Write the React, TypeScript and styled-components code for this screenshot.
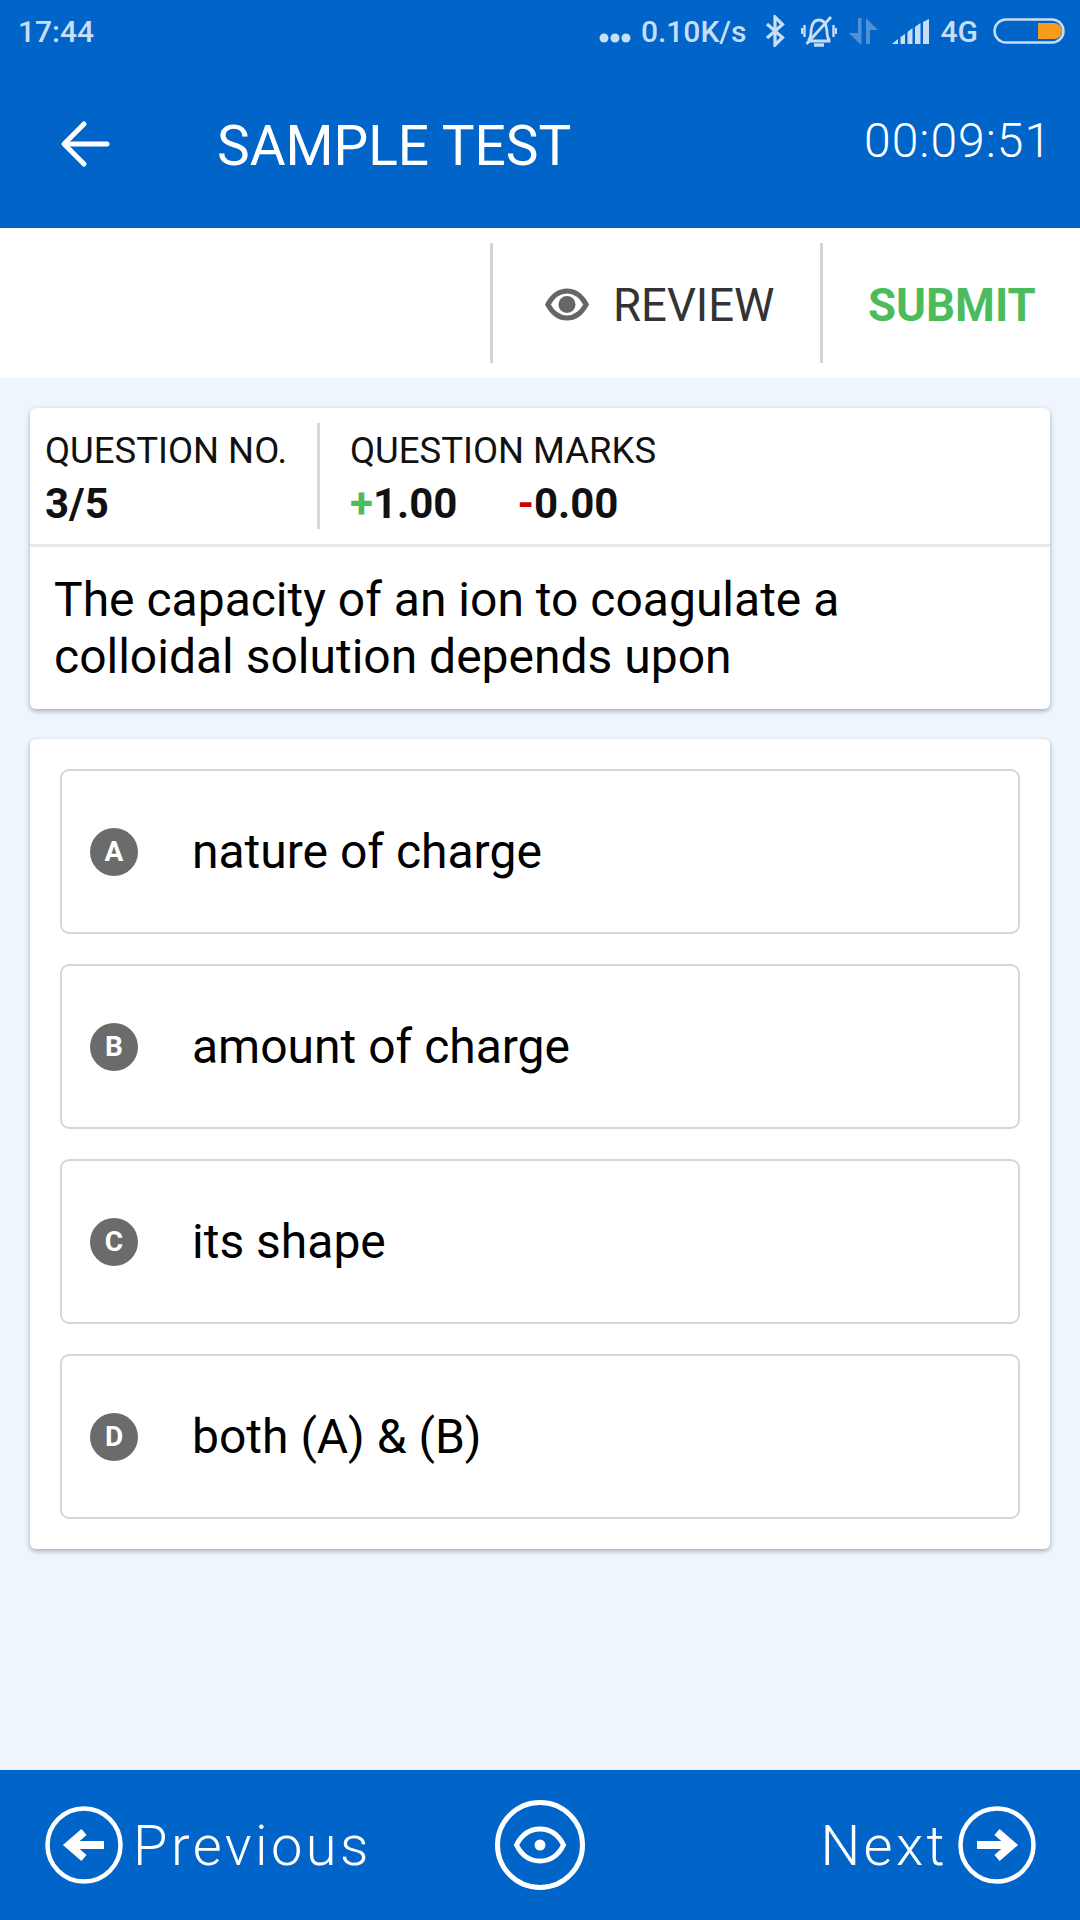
import React from "react";
import styled, { createGlobalStyle } from "styled-components";

const Global = createGlobalStyle`
  html, body { margin: 0; padding: 0; background: #eef5fd; }
  * { box-sizing: border-box; }
  body { font-family: Roboto, "Liberation Sans", sans-serif; }
`;

const Page = styled.div`
  width: 1080px;
  height: 1920px;
  display: flex;
  flex-direction: column;
  background: #eef5fd;
  overflow: hidden;
`;

const Header = styled.header`
  height: 228px;
  background: #0064c8;
  display: flex;
  flex-direction: column;
`;

const StatusBar = styled.div`
  height: 62px;
  padding: 0 15px 0 18px;
  display: flex;
  align-items: center;
  justify-content: space-between;
  color: #c8def5;
  font-size: 30px;
  font-weight: 500;
`;

const StatusRight = styled.div`
  display: flex;
  align-items: center;
`;

const Speed = styled.span`
  margin-left: 10px;
`;

const FourG = styled.span`
  margin-left: 12px;
`;

const TitleRow = styled.div`
  flex: 1;
  padding: 0 28px 0 60px;
  display: flex;
  align-items: center;
`;

const Title = styled.h1`
  margin: 2px 0 0 107px;
  flex: 1;
  font-size: 55px;
  font-weight: 400;
  color: #fff;
`;

const Timer = styled.div`
  font-size: 48px;
  font-weight: 300;
  color: #fff;
  letter-spacing: 1px;
  margin-bottom: 9px;
`;

const ActionBar = styled.div`
  height: 150px;
  background: #fff;
  display: flex;
  justify-content: flex-end;
  padding: 15px 0;
`;

const ActionCell = styled.div<{ $w: number }>`
  width: ${(p) => p.$w}px;
  border-left: 3px solid #d4d4d4;
  display: flex;
  align-items: center;
  padding-left: ${(p) => (p.$w > 300 ? 52 : 45)}px;
  padding-top: 5px;
  gap: 24px;
`;

const ReviewText = styled.span`
  font-size: 45.5px;
  color: #333;
`;

const SubmitText = styled.span`
  font-size: 45.5px;
  font-weight: 700;
  color: #4cbb5c;
`;

const Body = styled.main`
  flex: 1;
  padding: 30px 30px 0;
  display: flex;
  flex-direction: column;
  gap: 30px;
`;

const Card = styled.section`
  background: #fff;
  border-radius: 6px;
  box-shadow: 0 2px 5px rgba(40, 50, 70, 0.38);
`;

const MetaRow = styled.div`
  height: 139px;
  padding: 15px 0;
  display: flex;
  border-bottom: 3px solid #e8e8e8;
`;

const MetaCol = styled.div<{ $w?: number }>`
  ${(p) => (p.$w ? `width: ${p.$w}px;` : "flex: 1;")}
  display: flex;
  flex-direction: column;
  padding-left: ${(p) => (p.$w ? 15 : 30)}px;
  & + & { border-left: 3px solid #d8d8d8; }
`;

const MetaLabel = styled.div`
  font-size: 36.5px;
  color: #111;
  line-height: 44px;
  margin-top: 6px;
`;

const MetaValue = styled.div`
  margin-top: 6px;
  font-size: 42px;
  line-height: 50px;
  font-weight: 700;
  color: #111;
  display: flex;
  gap: 60px;
`;

const Plus = styled.span`
  color: #4cbb5c;
`;

const Minus = styled.span`
  color: #cc0000;
`;

const Question = styled.p`
  margin: 0;
  padding: 24px;
  font-size: 48px;
  line-height: 57px;
  color: #000;
`;

const OptionsCard = styled(Card)`
  padding: 30px;
  display: flex;
  flex-direction: column;
  gap: 30px;
`;

const Option = styled.div`
  height: 165px;
  border: 2.5px solid #d6d6d6;
  border-radius: 9px;
  padding: 0 28px;
  display: flex;
  align-items: center;
  gap: 54px;
  font-size: 48px;
  color: #000;
`;

const Badge = styled.span`
  width: 48px;
  height: 48px;
  border-radius: 50%;
  background: #6b6b6b;
  color: #fff;
  font-size: 28px;
  font-weight: 700;
  display: flex;
  align-items: center;
  justify-content: center;
  flex: none;
`;

const Footer = styled.footer`
  height: 150px;
  background: #0064c8;
  padding: 0 44px 0 45px;
  display: grid;
  grid-template-columns: 1fr auto 1fr;
  align-items: center;
`;

const NavSide = styled.div<{ $end?: boolean }>`
  display: flex;
  align-items: center;
  justify-content: ${(p) => (p.$end ? "flex-end" : "flex-start")};
  gap: 10px;
  font-size: 56px;
  letter-spacing: 3.4px;
  color: #fff;
`;

const NavText = styled.span`
  font-weight: 300;
  margin-top: 2px;
`;

const CenterNav = styled.div`
  display: flex;
  margin-left: -2px;
`;

const BackSvg = styled.svg`
  margin-bottom: 3px;
`;

const ReviewEye = styled.svg`
  margin-bottom: 3px;
`;

const IconGap = styled.svg<{ $ml: number }>`
  margin-left: ${(p) => p.$ml}px;
`;

const Back = () => (
  <BackSvg width="50" height="50" viewBox="0 0 50 50" fill="none" stroke="#fff" strokeWidth="5" strokeLinecap="round" strokeLinejoin="round">
    <path d="M47 25H5" />
    <path d="M24 5 4 25l20 20" />
  </BackSvg>
);

const EyeIcon = () => (
  <ReviewEye width="44" height="33" viewBox="0 0 44 33" fill="none">
    <path d="M2.800 16.500C8 7 15 3 22 3s14 4 19.200 13.500C36 26 29 30 22 30S8 26 2.800 16.500Z" stroke="#666" strokeWidth="5" />
    <circle cx="22" cy="16.500" r="8.500" fill="#666" />
  </ReviewEye>
);

const Round = ({ dir }: { dir: "l" | "r" }) => (
  <svg width="78" height="78" viewBox="0 0 78 78" fill="none">
    <circle cx="39" cy="39" r="36.500" stroke="#fff" strokeWidth="4.500" />
    <g transform={dir === "r" ? "rotate(180 39 39)" : undefined} stroke="#fff" strokeWidth="8">
      <path d="M59 39H26" />
      <path d="M39 26 24 39l15 13" strokeLinejoin="miter" />
    </g>
  </svg>
);

const CenterIcon = () => (
  <svg width="90" height="90" viewBox="0 0 90 90" fill="none">
    <circle cx="45" cy="45" r="42.500" stroke="#fff" strokeWidth="5" />
    <path d="M21.500 45C27 34 36 29 45 29s18 5 23.500 16C63 56 54 61 45 61s-18-5-23.500-16Z" stroke="#fff" strokeWidth="5" />
    <circle cx="45" cy="45" r="5.500" fill="#fff" />
  </svg>
);

const Dots = () => (
  <svg width="32" height="10" viewBox="0 0 32 10" fill="#c8def5" style={{ marginTop: 14 }}>
    <circle cx="5" cy="5" r="4.500" />
    <circle cx="16" cy="5" r="4.500" />
    <circle cx="27" cy="5" r="4.500" />
  </svg>
);

const Bluetooth = () => (
  <IconGap $ml={18} width="20" height="32" viewBox="0 0 20 32" fill="none" stroke="#c8def5" strokeWidth="3.200">
    <path d="M2 9 17.500 22.500 10 30V2l7.500 7.500L2 23" />
  </IconGap>
);

const MutedBell = () => (
  <IconGap $ml={16} width="36" height="31" viewBox="0 0 36 31" fill="none" stroke="#c8def5" strokeWidth="2.800">
    <path d="M8 23.500c2.500-2.500 1.500-7 2.500-11.500C11.500 6.500 14.500 4 18 4s6.500 2.500 7.500 8c1 4.500 0 9 2.500 11.500V25H8Z" />
    <path d="M13 29h10" strokeWidth="3.400" />
    <path d="M3.500 9v12M.8 12v6M32.500 9v12M35.200 12v6" strokeWidth="2.400" />
    <path d="M5.500 28 30 1" />
  </IconGap>
);

const DataArrows = () => (
  <IconGap $ml={12} width="29" height="26" viewBox="0 0 29 26" fill="#4f90d6">
    <path d="M9 0h3.500v26H11L0 15h9Z" />
    <path d="M17 0 29 12h-8v14h-4Z" />
  </IconGap>
);

const Signal = () => (
  <IconGap $ml={14} width="37" height="25" viewBox="0 0 37 25" fill="#c8def5">
    <path d="M0 25 6 20v5ZM8.500 18l4.500-3v10H8.500ZM15.500 13l5-4v16h-5ZM23 8l5.500-4v21H23ZM31 3l6-3v25h-6Z" />
  </IconGap>
);

const Battery = () => (
  <IconGap $ml={15} width="72" height="26" viewBox="0 0 72 26" fill="none">
    <rect x="1.500" y="1.500" width="69" height="23" rx="11.500" stroke="#c8def5" strokeWidth="2.500" />
    <path d="M45 5h16a8 8 0 0 1 0 16H45Z" fill="#f79a1e" />
  </IconGap>
);

const options = [
  { k: "A", t: "nature of charge" },
  { k: "B", t: "amount of charge" },
  { k: "C", t: "its shape" },
  { k: "D", t: "both (A) & (B)" },
];

export default function App() {
  return (
    <Page>
      <Global />
      <Header>
        <StatusBar>
          <span>17:44</span>
          <StatusRight>
            <Dots />
            <Speed>0.10K/s</Speed>
            <Bluetooth />
            <MutedBell />
            <DataArrows />
            <Signal />
            <FourG>4G</FourG>
            <Battery />
          </StatusRight>
        </StatusBar>
        <TitleRow>
          <Back />
          <Title>SAMPLE TEST</Title>
          <Timer>00:09:51</Timer>
        </TitleRow>
      </Header>
      <ActionBar>
        <ActionCell $w={330}>
          <EyeIcon />
          <ReviewText>REVIEW</ReviewText>
        </ActionCell>
        <ActionCell $w={260}>
          <SubmitText>SUBMIT</SubmitText>
        </ActionCell>
      </ActionBar>
      <Body>
        <Card>
          <MetaRow>
            <MetaCol $w={287}>
              <MetaLabel>QUESTION NO.</MetaLabel>
              <MetaValue>3/5</MetaValue>
            </MetaCol>
            <MetaCol>
              <MetaLabel>QUESTION MARKS</MetaLabel>
              <MetaValue>
                <span><Plus>+</Plus>1.00</span>
                <span><Minus>-</Minus>0.00</span>
              </MetaValue>
            </MetaCol>
          </MetaRow>
          <Question>
            The capacity of an ion to coagulate a
            <br />
            colloidal solution depends upon
          </Question>
        </Card>
        <OptionsCard>
          {options.map((o) => (
            <Option key={o.k}>
              <Badge>{o.k}</Badge>
              {o.t}
            </Option>
          ))}
        </OptionsCard>
      </Body>
      <Footer>
        <NavSide>
          <Round dir="l" />
          <NavText>Previous</NavText>
        </NavSide>
        <CenterNav>
          <CenterIcon />
        </CenterNav>
        <NavSide $end>
          <NavText>Next</NavText>
          <Round dir="r" />
        </NavSide>
      </Footer>
    </Page>
  );
}
